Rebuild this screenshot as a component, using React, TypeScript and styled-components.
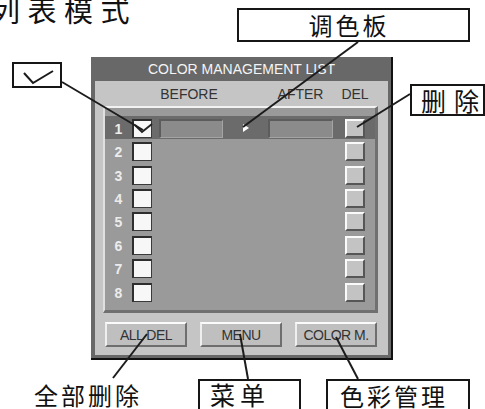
import styled, { createGlobalStyle } from "styled-components"

const GlobalStyle = createGlobalStyle`
    html, body {
        margin: 0;
        padding: 0;
        background: #fff;
    }
    body {
        font-family: "Liberation Sans", Arial, sans-serif;
    }
`

const cols = "27px 27px 64px 45px 65px 12px 20px"
const cjk = `"Noto Sans CJK SC", "Noto Sans", sans-serif`

const Page = styled.div`
    position: relative;
    width: 485px;
    height: 409px;
    overflow: hidden;
    background: #fff;
`

const Heading = styled.h1`
    margin: -5px 0 0 -9px;
    height: 27px;
    font: 400 29px/28px ${cjk};
    letter-spacing: 7.5px;
    color: #111;
`

const Panel = styled.section`
    width: 302px;
    margin: 35px 0 0 91px;
    padding: 0 3px 3px 4px;
    box-sizing: border-box;
    background: #686868;
    border-right: 2px solid #111;
    border-bottom: 2px solid #111;
`

const TitleBar = styled.div`
    height: 24px;
    line-height: 25px;
    text-align: center;
    font-size: 14px;
    color: #f4f4f4;
`

const Body = styled.div`
    background: #c5c5c5;
    padding: 0 10px 8px 8px;
`

const HeaderRow = styled.div`
    display: grid;
    grid-template-columns: ${cols};
    height: 25px;
    align-items: center;
    padding-left: 2px;
    font-size: 14px;
    color: #333;
`

const HeadCell = styled.span<{ $col: number; $shift?: number }>`
    grid-column: ${p => p.$col};
    justify-self: center;
    margin-left: ${p => p.$shift ?? 0}px;
    white-space: nowrap;
`

const ListFrame = styled.div`
    background: #9a9a9a;
    border-top: 2px solid #f2f2f2;
    border-left: 2px solid #e0e0e0;
    border-right: 3px solid #707070;
    border-bottom: 3px solid #707070;
    padding: 8px 0 7px;
`

const Row = styled.div<{ $active?: boolean }>`
    display: grid;
    grid-template-columns: ${cols};
    align-items: end;
    height: 23.4px;
    padding-bottom: 1.5px;
    box-sizing: border-box;
    background: ${p => (p.$active ? "#6b6b6b" : "transparent")};
`

const Num = styled.span`
    height: 19px;
    line-height: 20px;
    text-align: center;
    font-size: 14px;
    font-weight: bold;
    color: #ececec;
`

const Check = styled.span`
    position: relative;
    width: 20px;
    height: 19px;
    box-sizing: border-box;
    background: #f7f7f7;
    border-top: 2px solid #2e2e2e;
    border-left: 2px solid #2e2e2e;
    border-right: 1px solid #3a3a3a;
    border-bottom: 1px solid #3a3a3a;

    svg {
        position: absolute;
        left: -2px;
        top: -2px;
    }
`

const Field = styled.span<{ $w: number }>`
    width: ${p => p.$w}px;
    height: 19px;
    box-sizing: border-box;
    background: #8b8b8b;
    border-top: 2px solid #5c5c5c;
    border-left: 2px solid #5c5c5c;
    border-right: 1px solid #a4a4a4;
    border-bottom: 1px solid #a4a4a4;
`

const Pointer = styled.span`
    align-self: center;
    justify-self: center;
    width: 0;
    height: 0;
    margin-top: 3px;
    border-left: 6px solid #fff;
    border-top: 4px solid transparent;
    border-bottom: 4px solid transparent;
`

const DelBox = styled.span`
    grid-column: 7;
    width: 20px;
    height: 19px;
    box-sizing: border-box;
    background: #c3c3c3;
    border-top: 2px solid #fafafa;
    border-left: 2px solid #fafafa;
    border-right: 2px solid #565656;
    border-bottom: 2px solid #565656;
`

const ButtonRow = styled.div`
    display: grid;
    grid-template-columns: repeat(3, 82px);
    column-gap: 13px;
    margin: 9px 0 0 2px;
`

const PanelButton = styled.div`
    height: 25px;
    box-sizing: border-box;
    background: #bfbfbf;
    border-top: 2px solid #fbfbfb;
    border-left: 2px solid #efefef;
    border-right: 2px solid #6e6e6e;
    border-bottom: 2px solid #6e6e6e;
    font-size: 14px;
    line-height: 22px;
    letter-spacing: -0.5px;
    text-align: center;
    color: #333;
`

const Callout = styled.div<{ $x: number; $y: number; $w: number; $h: number; $pad?: number }>`
    position: absolute;
    left: ${p => p.$x}px;
    top: ${p => p.$y}px;
    width: ${p => p.$w}px;
    height: ${p => p.$h}px;
    box-sizing: border-box;
    border: 2px solid #161616;
    background: #fff;
    padding-left: ${p => p.$pad ?? 0}px;
    display: flex;
    align-items: center;
    justify-content: ${p => (p.$pad === undefined ? "center" : "flex-start")};
`

const CalloutText = styled.span<{ $size: number; $gap: number; $top?: number }>`
    display: flex;
    gap: ${p => p.$gap}px;
    font: 400 ${p => p.$size}px/${p => p.$size}px ${cjk};
    color: #111;
    align-self: ${p => (p.$top !== undefined ? "flex-start" : "center")};
    margin-top: ${p => p.$top ?? 0}px;
    white-space: nowrap;
`

const FreeLabel = styled.span`
    position: absolute;
    left: 34px;
    top: 383px;
    font: 400 24px/24px ${cjk};
    letter-spacing: 3px;
    color: #111;
    white-space: nowrap;
`

const Leaders = styled.svg`
    position: absolute;
    left: 0;
    top: 0;
    pointer-events: none;
`

const rows = [1, 2, 3, 4, 5, 6, 7, 8]

function Chars({ text }: { text: string }) {
    return <>{[...text].map((c, i) => <span key={i}>{c}</span>)}</>
}

export default function App() {
    return <Page>
        <GlobalStyle />
        <Heading>列表模式</Heading>
        <Panel>
            <TitleBar>COLOR MANAGEMENT LIST</TitleBar>
            <Body>
                <HeaderRow>
                    <HeadCell $col={3} $shift={-4}>BEFORE</HeadCell>
                    <HeadCell $col={5}>AFTER</HeadCell>
                    <HeadCell $col={7}>DEL</HeadCell>
                </HeaderRow>
                <ListFrame>
                    {rows.map(n => (
                        <Row key={n} $active={n === 1}>
                            <Num>{n}</Num>
                            <Check>
                                {n === 1 && (
                                    <svg width="22" height="21" viewBox="0 0 22 21">
                                        <path d="M3 6 L10 13 L20 5" fill="none" stroke="#222" strokeWidth="2" />
                                    </svg>
                                )}
                            </Check>
                            {n === 1 && <>
                                <Field $w={64} />
                                <Pointer />
                                <Field $w={65} />
                            </>}
                            <DelBox />
                        </Row>
                    ))}
                </ListFrame>
                <ButtonRow>
                    <PanelButton>ALL DEL</PanelButton>
                    <PanelButton>MENU</PanelButton>
                    <PanelButton>COLOR M.</PanelButton>
                </ButtonRow>
            </Body>
        </Panel>

        <Callout $x={12} $y={62} $w={50} $h={26}>
            <svg width="46" height="22" viewBox="0 0 46 22">
                <path d="M10 9 L19 19 L39 7" fill="none" stroke="#1a1a1a" strokeWidth="2" />
            </svg>
        </Callout>
        <Callout $x={237} $y={8} $w={233} $h={34}>
            <CalloutText $size={24} $gap={3} style={{ marginRight: 12 }}><Chars text="调色板" /></CalloutText>
        </Callout>
        <Callout $x={410} $y={84} $w={75} $h={32} $pad={9}>
            <CalloutText $size={25} $gap={8}><Chars text="删除" /></CalloutText>
        </Callout>
        <FreeLabel>全部删除</FreeLabel>
        <Callout $x={198} $y={379} $w={103} $h={40} $pad={10}>
            <CalloutText $size={25} $gap={5} $top={1}><Chars text="菜单" /></CalloutText>
        </Callout>
        <Callout $x={326} $y={379} $w={144} $h={40} $pad={12}>
            <CalloutText $size={24} $gap={3} $top={3}><Chars text="色彩管理" /></CalloutText>
        </Callout>

        <Leaders width="485" height="409" viewBox="0 0 485 409">
            <g stroke="#1c1c1c" strokeWidth="2" fill="none">
                <line x1="62" y1="82" x2="143" y2="130" />
                <line x1="358" y1="42" x2="243" y2="127" />
                <line x1="410" y1="94" x2="357" y2="127" />
                <line x1="113" y1="378" x2="147" y2="334" />
                <line x1="248" y1="379" x2="240" y2="334" />
                <line x1="358" y1="379" x2="336" y2="337" />
            </g>
        </Leaders>
    </Page>
}
